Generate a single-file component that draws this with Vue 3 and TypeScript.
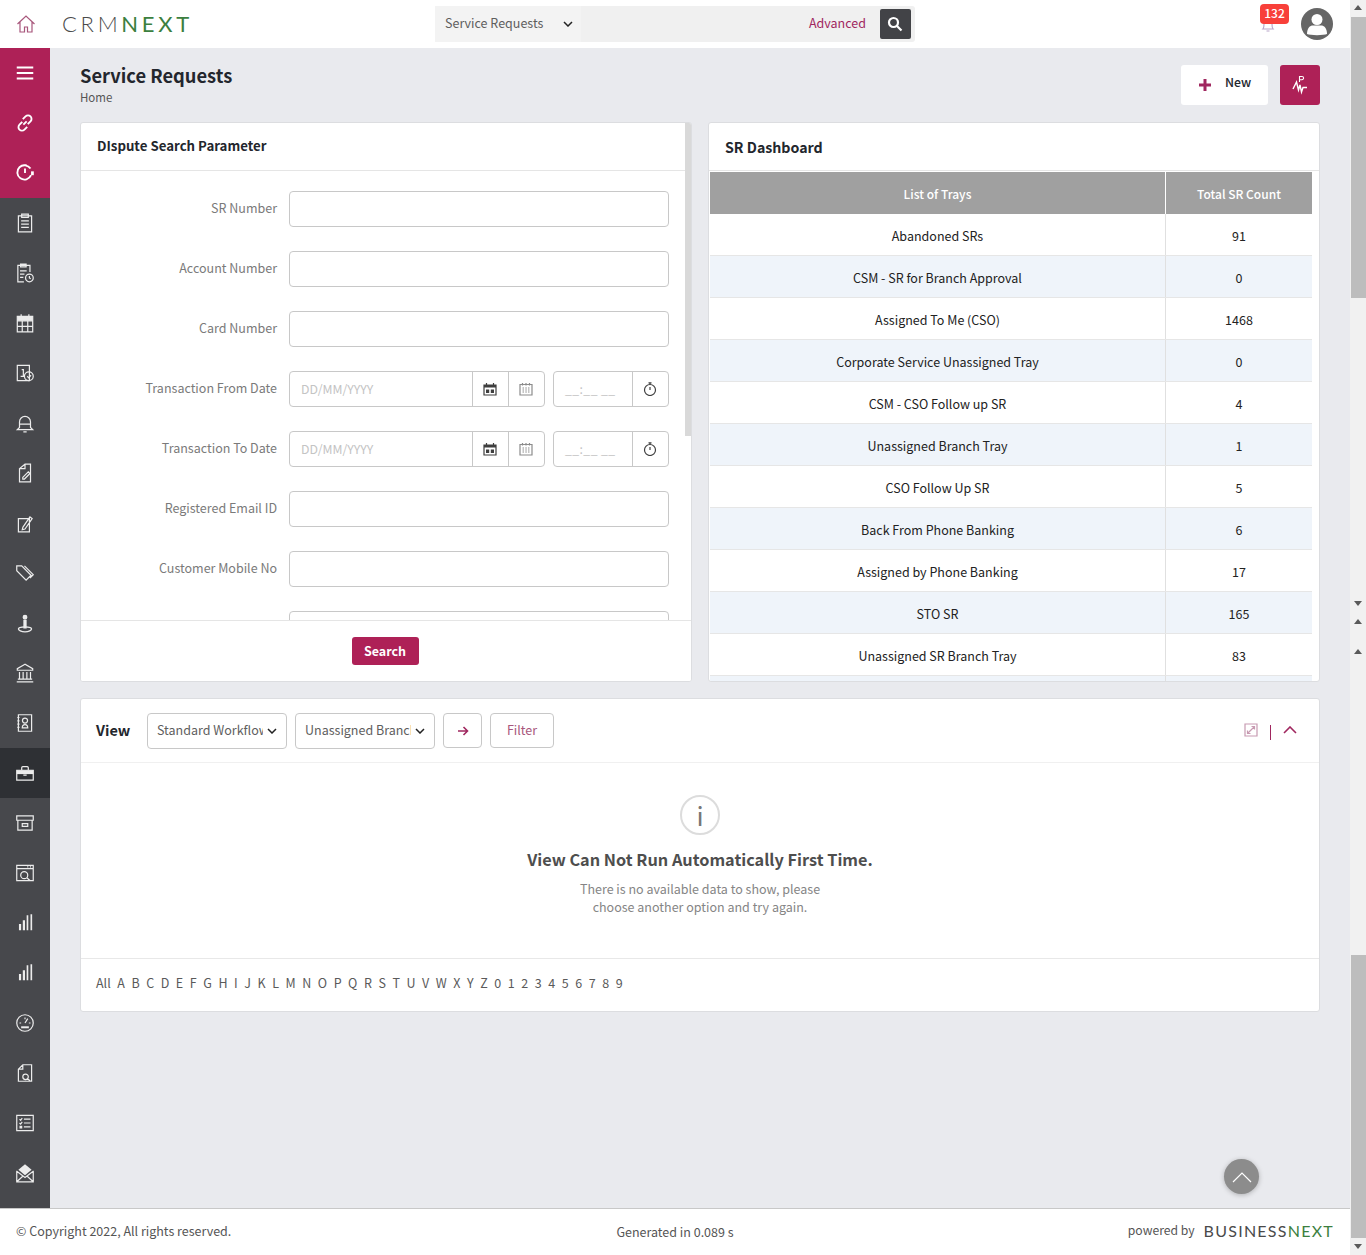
<template>
  <div class="screen">
    <div class="page">
      <!-- Top bar -->
      <header class="topbar">
        <svg class="home" viewBox="0 0 20 20" width="20" height="20">
          <path d="M1.500 10 10 2l8.500 8M4 8v10h4.500v-5h3v5H16V8" />
        </svg>
        <div class="logo"><span class="logo-crm">CRM</span><span class="logo-next">NEXT</span></div>
        <div class="global-search">
          <div class="scope">
            <span>Service Requests</span>
            <svg viewBox="0 0 10 6" width="10" height="6"><path d="M1 1l4 4 4-4" /></svg>
          </div>
          <span class="advanced">Advanced</span>
          <button class="search-go">
            <svg viewBox="0 0 16 16" width="16" height="16">
              <circle cx="6.500" cy="6.500" r="4.500" /><path d="M10 10l4.500 4.500" />
            </svg>
          </button>
        </div>
        <div class="top-right">
          <div class="bell">
            <svg viewBox="0 0 16 16" width="16" height="16"><path d="M3 12c1-1 1-2 1-5 0-2.500 2-4 4-4s4 1.500 4 4c0 3 0 4 1 5zM6.500 14h3" /></svg>
            <span class="badge">132</span>
          </div>
          <svg class="avatar" viewBox="0 0 32 32" width="32" height="32">
            <circle cx="16" cy="16" r="16" fill="#666" />
            <circle cx="16" cy="11.500" r="5.500" fill="#fff" />
            <path d="M6 26c0-6 3-8.500 6-8.500h8c3 0 6 2.500 6 8.500-3 1.500-17 1.500-20 0z" fill="#fff" />
          </svg>
        </div>
      </header>

      <div class="middle">
        <!-- Left rail -->
        <nav class="sidebar">
          <div v-for="(item, i) in navItems" :key="i" class="nav-item"
               :class="{ brand: i < 3, active: i === 14 }">
            <svg viewBox="0 0 20 20" width="22" height="22">
              <path v-for="(d, j) in item.lines" :key="j" :d="d" />
              <path v-if="item.solid" class="solid" :d="item.solid" />
            </svg>
          </div>
        </nav>

        <main class="content">
          <div class="title-row">
            <div>
              <h1>Service Requests</h1>
              <div class="crumb">Home</div>
            </div>
            <div class="title-actions">
              <button class="new-btn">
                <svg viewBox="0 0 14 14" width="14" height="14"><path d="M7 1v12M1 7h12" /></svg>
                <span>New</span>
              </button>
              <button class="pulse-btn">
                <svg viewBox="0 0 20 20" width="20" height="20">
                  <path d="M3 14 6.500 7l2 8L10 10l1.500 7 1.500-4.500h4" />
                  <path d="M9.500 7V1.500H12a1.600 1.600 0 0 1 0 3.200H9.500" class="thin" />
                </svg>
              </button>
            </div>
          </div>

          <div class="cards">
            <!-- Search form -->
            <section class="card search-card">
              <div class="card-head dispute">DIspute Search Parameter</div>
              <div class="form-body">
                <div v-for="(field, i) in formFields" :key="i" class="form-row">
                  <label>{{ field.label }}</label>
                  <div v-if="field.date" class="date-fields">
                    <div class="field-group date-group">
                      <span class="placeholder">DD/MM/YYYY</span>
                      <span class="addon">
                        <svg viewBox="0 0 14 14" width="14" height="14">
                          <path d="M1 3h12v10H1zM3.500 1v3M10.500 1v3" />
                          <path class="solid" d="M1 3h12v2.500H1zM3 7.500h3.200v3.500H3zM7.800 7.500H11v3.500H7.800z" />
                        </svg>
                      </span>
                      <span class="addon light">
                        <svg viewBox="0 0 14 14" width="14" height="14">
                          <path d="M1 2.500h12V13H1zM3.500 1v2.500M7 1v2.500M10.500 1v2.500M3.500 6h1.500M6.300 6h1.500M9 6h1.500M3.500 8h1.500M6.300 8h1.500M9 8h1.500M3.500 10h1.500M6.300 10h1.500M9 10h1.500" />
                        </svg>
                      </span>
                    </div>
                    <div class="field-group time-group">
                      <span class="placeholder mask">__:__ __</span>
                      <span class="addon">
                        <svg viewBox="0 0 14 14" width="14" height="14">
                          <circle cx="7" cy="8" r="5.500" /><path d="M5.500 .8h3M7 1V2.500M7 5V8" />
                        </svg>
                      </span>
                    </div>
                  </div>
                  <div v-else class="text-input"></div>
                </div>
              </div>
              <div class="form-foot"><button class="search-btn">Search</button></div>
              <div class="inner-thumb"></div>
            </section>

            <!-- SR dashboard -->
            <section class="card dash-card">
              <div class="card-head dash-head">SR Dashboard</div>
              <div class="tray-table">
                <div class="tray-row tray-header">
                  <div class="tray-name">List of Trays</div>
                  <div class="tray-count">Total SR Count</div>
                </div>
                <div v-for="(tray, i) in trays" :key="i" class="tray-row">
                  <div class="tray-name">{{ tray.name }}</div>
                  <div class="tray-count">{{ tray.count }}</div>
                </div>
              </div>
            </section>
          </div>

          <!-- View -->
          <section class="card view-card">
            <div class="view-bar">
              <strong>View</strong>
              <div class="select"><span>Standard Workflow</span><svg viewBox="0 0 10 6" width="10" height="6"><path d="M1 1l4 4 4-4" /></svg></div>
              <div class="select"><span>Unassigned Branch</span><svg viewBox="0 0 10 6" width="10" height="6"><path d="M1 1l4 4 4-4" /></svg></div>
              <button class="go-btn">
                <svg viewBox="0 0 12 10" width="12" height="10"><path d="M1 5h9.500M6.500 1l4 4-4 4" /></svg>
              </button>
              <button class="filter-btn">Filter</button>
              <div class="view-tools">
                <svg class="expand" viewBox="0 0 14 14" width="14" height="14">
                  <path d="M1 1h12v12H1zM3.500 10.500l7-7M7.500 3.500h3v3M3.500 7.500v3h3" />
                </svg>
                <span class="pipe"></span>
                <svg class="collapse" viewBox="0 0 14 8" width="14" height="8"><path d="M1 7l6-6 6 6" /></svg>
              </div>
            </div>
            <div class="empty">
              <div class="info-ring">i</div>
              <h2>View Can Not Run Automatically First Time.</h2>
              <p>There is no available data to show, please<br />choose another option and try again.</p>
            </div>
            <div class="alpha">
              <span v-for="ch in alphabet" :key="ch">{{ ch }}</span>
            </div>
          </section>

          <button class="to-top">
            <svg viewBox="0 0 20 12" width="20" height="12"><path d="M1 11l9-9 9 9" /></svg>
          </button>
        </main>
      </div>

      <footer class="footer">
        <span class="copy">© Copyright 2022, All rights reserved.</span>
        <span class="generated">Generated in 0.089 s</span>
        <span class="powered">powered by <span class="bn"><span>BUSINESS</span><span class="bn-next">NEXT</span></span></span>
      </footer>
    </div>

    <!-- Browser scrollbars, two stacked rails -->
    <aside class="rail">
      <div class="rail-part first">
        <i class="arrow up"></i>
        <div class="thumb thumb-a"></div>
        <i class="arrow down end"></i>
      </div>
      <div class="rail-part second">
        <i class="arrow up"></i>
        <i class="arrow up gap"></i>
        <div class="thumb thumb-b"></div>
        <i class="arrow down end"></i>
      </div>
    </aside>
  </div>
</template>

<script setup lang="ts">
interface NavItem {
  lines: string[]
  solid?: string
}

const navItems: NavItem[] = [
  { lines: [], solid: 'M2.500 4h15v2h-15zM2.500 9h15v2h-15zM2.500 14h15v2h-15z' },
  { lines: ['M8.500 11.500l3-3M8 6.500l2.500-2.500a3 3 0 0 1 4.500 4.500L12.500 11M12 13.500 9.500 16A3 3 0 0 1 5 11.500L7.500 9'] },
  { lines: ['M15.500 12a6.500 6.500 0 1 1-.5-6M10 6v4M8.500 3h3'], solid: 'M15.500 8.500h2.500v3.500h-2.500z' },
  { lines: ['M4 3.500h12V18H4zM7 2h6v3H7zM6.500 8h7M6.500 11h7M6.500 14h7'] },
  { lines: ['M14.500 9V3h-11v15H9M6 2h5v2.500H6zM5.500 8h6M5.500 11h4M5.500 14h3', 'M17.500 14.500a3.500 3.500 0 1 1-7 0 3.500 3.500 0 0 1 7 0zM14 12.700v1.800l1.200.8'] },
  { lines: ['M3 4h14v14H3zM6.500 2v4M13.500 2v4M3 8h14M7.500 8v10M12.500 8v10M3 13h14'], solid: 'M3 4h14v4H3z' },
  { lines: ['M3 3h11v14H3zM7 7h1.500v6M6 13h4', 'M17.500 13a4 4 0 1 1-8 0 4 4 0 0 1 8 0zM12 13l1.500 1.500 2-2.500'] },
  { lines: ['M5 14V9a5 5 0 0 1 10 0v5l2 2H3zM8.500 18h3M5.500 11h9'] },
  { lines: ['M5 6l5-4h5v16H5zM10 2v4H5', 'M8 14l5-5 1.500 1.500-5 5H8z'] },
  { lines: ['M4 6h10v12H4zM8 14l6.500-9.500 2 1.500L10 15.500 7.500 16z'] },
  { lines: ['M2.500 8V3.500H7l8.500 8.500-4.500 4.500zM9.500 3.500l8 8-3 3'] },
  { lines: ['M4 15.500c0-1 2.500-2 6-2s6 1 6 2-2.500 2.500-6 2.500-6-1.500-6-2.500z'], solid: 'M8.500 7h3v8h-3zM10 2.500a2.200 2.200 0 1 1 0 4.400 2.200 2.200 0 0 1 0-4.400z' },
  { lines: ['M10 2 3 6v1.500h14V6zM5 9v6M8.300 9v6M11.700 9v6M15 9v6M3.500 15.500h13M2.500 18h15'] },
  { lines: ['M4 2.500h12v15H4zM3 5h2M3 8h2M3 11h2M3 14h2', 'M7.500 14.500c0-2 1-3 2.500-3s2.500 1 2.500 3zM10 5.500a2.300 2.300 0 1 1 0 4.600 2.300 2.300 0 0 1 0-4.600z'] },
  { lines: ['M2.500 7.500h15v9h-15zM7 7.500V5.200c0-.5.500-1 1-1h4c.5 0 1 .5 1 1v2.300M8.500 12h3'], solid: 'M2.500 7.500h15v3.500h-15z' },
  { lines: ['M2.500 3.500h15v4h-15zM3.500 7.500v9h13v-9M7.500 10.500h5v2.500h-5z'] },
  { lines: ['M2.500 3h15v14h-15zM2.500 6h15M12 4.500h1M14.500 4.500h1M12.500 12a3.200 3.200 0 1 1-6.400 0 3.200 3.200 0 0 1 6.400 0zM11.700 14.300l3 2.700'] },
  { lines: [], solid: 'M4.500 11H6.500v5.500H4.500zM8 7.500h2v9H8zM11.500 3h1.500v13.500h-1.500zM15 2h1.500v14.500H15z' },
  { lines: [], solid: 'M4.500 11H6.500v5.500H4.500zM8 7.500h2v9H8zM11.500 3h1.500v13.500h-1.500zM15 2h1.500v14.500H15z' },
  { lines: ['M17.500 10a7.500 7.500 0 1 1-15 0 7.500 7.500 0 0 1 15 0zM10 10l2.500-4M5 10h1.500M10 5v1.500M13.500 10H15'], solid: 'M6.500 13h7v1.800h-7z' },
  { lines: ['M8 2.500h8v15H4V6.500zM8 2.500v4H4M13 13.500a2.500 2.500 0 1 1-5 0 2.500 2.500 0 0 1 5 0zM12.300 15.300l2.500 2'] },
  { lines: ['M2.500 3h15v14h-15zM9 6.500h6M9 10h6M9 13.500h6M5 6.500l1 1 1.500-2M5 10l1 1 1.500-2'], solid: 'M5 12.500h2.500V15H5z' },
  { lines: ['M2.500 8v10h15V8M2.500 18l5.500-5M17.500 18 12 13M2.500 8.500 10 14l7.500-5.500'], solid: 'M10 2l6 5-6 5-6-5z' },
]

const formFields = [
  { label: 'SR Number' },
  { label: 'Account Number' },
  { label: 'Card Number' },
  { label: 'Transaction From Date', date: true },
  { label: 'Transaction To Date', date: true },
  { label: 'Registered Email ID' },
  { label: 'Customer Mobile No' },
  // only the top edge of this input shows above the footer
  { label: '' },
]

const trays = [
  { name: 'Abandoned SRs', count: 91 },
  { name: 'CSM - SR for Branch Approval', count: 0 },
  { name: 'Assigned To Me (CSO)', count: 1468 },
  { name: 'Corporate Service Unassigned Tray', count: 0 },
  { name: 'CSM - CSO Follow up SR', count: 4 },
  { name: 'Unassigned Branch Tray', count: 1 },
  { name: 'CSO Follow Up SR', count: 5 },
  { name: 'Back From Phone Banking', count: 6 },
  { name: 'Assigned by Phone Banking', count: 17 },
  { name: 'STO SR', count: 165 },
  { name: 'Unassigned SR Branch Tray', count: 83 },
  { name: '', count: '' },
]

const alphabet = ['All', ...'ABCDEFGHIJKLMNOPQRSTUVWXYZ0123456789'.split('')]
</script>

<style>
html,
body {
  margin: 0;
  overflow: hidden;
}
</style>

<style scoped>
.screen {
  display: flex;
  width: 1366px;
  height: 1255px;
  overflow: hidden;
  font-family: "Noto Sans CJK SC", "Noto Sans", sans-serif;
  font-size: 12.5px;
  color: #222;
}
svg {
  display: block;
  flex: none;
  fill: none;
  stroke: currentColor;
  stroke-width: 1.2;
}
button {
  font-family: inherit;
  cursor: pointer;
}
h1,
h2,
p {
  margin: 0;
}

.page {
  width: 1350px;
  display: flex;
  flex-direction: column;
}

/* top bar */
.topbar {
  height: 48px;
  flex: none;
  display: flex;
  align-items: center;
  background: #fff;
  position: relative;
}
.home {
  margin-left: 16px;
  color: #a8577c;
}
.logo {
  margin-left: 26px;
  width: 140px;
  font-family: "Lato", sans-serif;
  font-size: 22px;
  font-weight: 300;
  letter-spacing: 3.7px;
  line-height: 48px;
}
.logo-crm {
  color: #4a4a4a;
}
.logo-next {
  color: #3c7f3f;
  font-weight: 400;
}
.global-search {
  margin-left: 233px;
  width: 480px;
  height: 36px;
  display: flex;
  align-items: center;
  background: #f0f0f0;
  border-radius: 3px;
}
.scope {
  width: 146px;
  height: 36px;
  padding: 0 7px 0 10px;
  box-sizing: border-box;
  display: flex;
  align-items: center;
  justify-content: space-between;
  background: #f3f3f3;
  color: #5e5e5e;
}
.scope span {
  margin-top: -4px;
}
.scope svg {
  margin: 0 1px 0 0;
  color: #222;
  stroke-width: 1.5;
}
.advanced {
  margin-left: auto;
  padding-bottom: 4px;
  color: #a0275f;
}
.search-go {
  margin: 0 4px 0 14px;
  width: 31px;
  height: 30px;
  padding: 0 2px 0 0;
  border: 0;
  border-radius: 2px;
  background: #424347;
  color: #fff;
  display: flex;
  align-items: center;
  justify-content: center;
}
.search-go svg {
  stroke-width: 2.2;
}
.top-right {
  margin-left: auto;
  margin-right: 17px;
  display: flex;
  align-items: center;
  gap: 25px;
}
.bell {
  position: relative;
  width: 16px;
  height: 16px;
  margin-top: 2px;
  color: #b9a6c9;
}
.badge {
  position: absolute;
  left: 0;
  top: -13px;
  width: 29px;
  height: 20px;
  border-radius: 4px;
  background: #f8403a;
  color: #fff;
  font-size: 12px;
  font-weight: 500;
  line-height: 18px;
  text-align: center;
}
.avatar {
  stroke: none;
}

/* sidebar */
.middle {
  flex: 1;
  min-height: 0;
  display: flex;
}
.sidebar {
  width: 50px;
  flex: none;
  background: #47484c;
  overflow: hidden;
}
.nav-item {
  height: 50px;
  display: flex;
  align-items: center;
  justify-content: center;
  color: #ececec;
}
.nav-item svg {
  stroke-width: 1.100;
}
.nav-item.brand {
  background: #ae2157;
  color: #fff;
}
.nav-item.brand svg {
  stroke-width: 1.700;
}
.nav-item.active {
  background: #2e3034;
}
.solid {
  fill: currentColor;
  stroke: none;
}

/* content */
.content {
  flex: 1;
  min-width: 0;
  position: relative;
  background: #e9eaee;
  padding: 0 30px;
}
.title-row {
  height: 74px;
  display: flex;
  justify-content: space-between;
}
h1 {
  margin-top: 13px;
  font-size: 18.3px;
  font-weight: 700;
  line-height: 28px;
  color: #23262d;
}
.crumb {
  font-size: 11.5px;
  line-height: 16px;
  color: #555;
}
.title-actions {
  display: flex;
  gap: 12px;
  margin-top: 17px;
}
.new-btn {
  width: 87px;
  height: 40px;
  padding: 0 0 0 17px;
  border: 0;
  border-radius: 3px;
  background: #fff;
  display: flex;
  align-items: center;
  gap: 13px;
  font-size: 12.3px;
  font-weight: 500;
  color: #23262d;
}
.new-btn span {
  margin-top: -6px;
}
.new-btn svg {
  color: #a0275f;
  stroke-width: 3;
}
.pulse-btn {
  width: 40px;
  height: 40px;
  padding: 0;
  border: 0;
  border-radius: 3px;
  background: #ae2157;
  color: #fff;
  display: flex;
  align-items: center;
  justify-content: center;
}
.pulse-btn svg {
  stroke-width: 1.400;
}
.pulse-btn .thin {
  stroke-width: 1.100;
}

/* cards */
.cards {
  display: flex;
  gap: 16px;
}
.card {
  background: #fff;
  border: 1px solid #dcdde0;
  border-radius: 3px;
  box-sizing: border-box;
  position: relative;
}
.search-card,
.dash-card {
  width: 612px;
  height: 560px;
  display: flex;
  flex-direction: column;
  overflow: hidden;
}
.card-head {
  flex: none;
  height: 47px;
  padding-left: 16px;
  border-bottom: 1px solid #e5e5e5;
  font-weight: 700;
  color: #23262d;
}
.dispute {
  line-height: 45px;
  font-size: 13.250px;
}
.dash-head {
  line-height: 48px;
  font-size: 14.200px;
}
.form-body {
  flex: 1;
  min-height: 0;
  overflow: hidden;
  padding-top: 20px;
}
.form-row {
  display: grid;
  grid-template-columns: 196px 380px;
  column-gap: 12px;
  margin-bottom: 24px;
}
.form-row label {
  text-align: right;
  line-height: 33px;
  color: #7a7a7a;
}
.text-input {
  height: 36px;
  box-sizing: border-box;
  border: 1px solid #c8c8c8;
  border-radius: 4px;
}
.date-fields {
  display: flex;
  gap: 8px;
}
.field-group {
  height: 36px;
  box-sizing: border-box;
  border: 1px solid #c8c8c8;
  border-radius: 4px;
  display: flex;
  align-items: center;
}
.date-group {
  width: 256px;
}
.time-group {
  width: 116px;
}
.placeholder {
  flex: 1;
  padding: 0 0 1px 11px;
  font-size: 12.300px;
  color: #c4c4c4;
}
.mask {
  letter-spacing: 0.400px;
}
.addon {
  width: 36px;
  height: 34px;
  padding-right: 2px;
  box-sizing: border-box;
  border-left: 1px solid #c8c8c8;
  display: flex;
  align-items: center;
  justify-content: center;
  color: #3f3f3f;
}
.addon.light {
  color: #8c8c8c;
}
.form-foot {
  flex: none;
  height: 61px;
  border-top: 1px solid #e5e5e5;
  display: flex;
  justify-content: center;
  padding: 16px 2px 0 0;
  box-sizing: border-box;
  background: #fff;
}
.search-btn {
  width: 67px;
  height: 28px;
  border: 0;
  border-radius: 3px;
  padding: 0 0 2px;
  background: #ae2157;
  color: #fff;
  font-size: 12.5px;
  font-weight: 700;
}
.inner-thumb {
  position: absolute;
  right: 0;
  top: 0;
  width: 6px;
  height: 313px;
  background: #d9d9d9;
}
.tray-table {
  margin: 1px 7px 0 1px;
}
.tray-row {
  height: 42px;
  display: flex;
  align-items: stretch;
  background: #fff;
  border-bottom: 1px solid #e6e6e6;
  box-sizing: border-box;
  line-height: 43px;
  text-align: center;
  color: #222;
}
.tray-row:nth-child(odd):not(.tray-header) {
  background: #eff4fa;
}
.tray-name {
  width: 455px;
  border-right: 1px solid #e0e0e0;
}
.tray-count {
  flex: 1;
}
.tray-header {
  background: #a0a0a0;
  color: #fff;
  font-size: 12px;
  font-weight: 500;
  line-height: 43px;
  border-bottom: 0;
}
.tray-header .tray-name {
  border-right-color: #fff;
}

/* view card */
.view-card {
  margin-top: 16px;
  height: 314px;
}
.view-bar {
  height: 64px;
  box-sizing: border-box;
  padding: 14px 22px 0 15px;
  border-bottom: 1px solid #f0f0f0;
  display: flex;
  align-items: flex-start;
  gap: 8px;
}
.view-bar strong {
  width: 43px;
  font-size: 14.500px;
  font-weight: 700;
  line-height: 33px;
  color: #23262d;
}
.select {
  width: 140px;
  height: 36px;
  padding: 0 9px;
  box-sizing: border-box;
  border: 1px solid #c8c8c8;
  border-radius: 4px;
  display: flex;
  align-items: center;
  gap: 4px;
  color: #5e5e5e;
}
.select span {
  width: 106px;
  overflow: hidden;
  white-space: nowrap;
  margin-top: -4px;
}
.select svg {
  color: #222;
  stroke-width: 1.500;
}
.go-btn,
.filter-btn {
  height: 35px;
  padding: 0;
  border: 1px solid #c8c8c8;
  border-radius: 4px;
  background: #fff;
  color: #a0275f;
  font-size: 12.5px;
  display: flex;
  align-items: center;
  justify-content: center;
}
.go-btn {
  width: 39px;
}
.go-btn svg {
  stroke-width: 1.600;
}
.filter-btn {
  width: 64px;
  padding-bottom: 2px;
  color: #a8577c;
}
.view-tools {
  margin: 1px 0 0 auto;
  display: flex;
  align-items: center;
  gap: 12px;
  height: 30px;
  color: #a0275f;
}
.expand {
  margin-top: 2px;
  color: #c79ab1;
}
.pipe {
  width: 1px;
  height: 15px;
  margin-top: 7px;
  background: #a0275f;
}
.collapse {
  margin-top: 2px;
  stroke-width: 1.600;
}
.empty {
  height: 196px;
  box-sizing: border-box;
  padding-top: 32px;
  text-align: center;
  border-bottom: 1px solid #e8e8e8;
}
.info-ring {
  width: 36px;
  height: 36px;
  margin: 0 auto;
  border: 2px solid #dcdcdc;
  border-radius: 50%;
  font-size: 26px;
  line-height: 36px;
  color: #777;
}
h2 {
  margin-top: 11px;
  font-size: 16.300px;
  font-weight: 700;
  line-height: 26px;
  color: #4e4e4e;
}
.empty p {
  margin-top: 8px;
  line-height: 18px;
  color: #858585;
}
.alpha {
  padding: 14px 0 0 15px;
  display: flex;
  gap: 6.550px;
  color: #5a5a5a;
  line-height: 20px;
}
.to-top {
  position: absolute;
  right: 91px;
  bottom: 14px;
  width: 35px;
  height: 35px;
  padding: 0;
  border: 0;
  border-radius: 50%;
  background: #8c8c8c;
  color: #fff;
  box-shadow: 0 1px 5px rgba(0, 0, 0, 0.25);
  display: flex;
  align-items: center;
  justify-content: center;
}
.to-top svg {
  stroke-width: 1.200;
}

/* footer */
.footer {
  height: 47px;
  flex: none;
  display: grid;
  grid-template-columns: 1fr 1fr 1fr;
  align-items: center;
  padding: 0 16px 2px;
  border-top: 1px solid #c8c8c8;
  box-sizing: border-box;
  background: #fff;
  color: #555;
}
.copy {
  margin-top: -2px;
}
.generated {
  text-align: center;
}
.powered {
  margin-top: -2px;
  font-size: 12.200px;
  display: flex;
  justify-content: flex-end;
  align-items: center;
  gap: 9px;
}
.bn {
  font-family: "Lato", sans-serif;
  font-size: 16px;
  letter-spacing: 1.250px;
  color: #4a4a4a;
}
.bn-next {
  color: #3c7f3f;
}

/* scroll rails */
.rail {
  width: 16px;
  flex: none;
  display: flex;
  flex-direction: column;
  background: #f1f1f1;
}
.rail-part {
  position: relative;
  flex: none;
}
.first {
  height: 612px;
}
.second {
  height: 643px;
}
.thumb {
  position: absolute;
  left: 1px;
  width: 15px;
  background: #bdbdbd;
}
.thumb-a {
  top: 17px;
  height: 281px;
}
.thumb-b {
  top: 343px;
  height: 283px;
}
.arrow {
  position: absolute;
  left: 4px;
  width: 0;
  height: 0;
  border-left: 4px solid transparent;
  border-right: 4px solid transparent;
}
.arrow.up {
  top: 7px;
  border-bottom: 5px solid #5a5a5a;
}
.arrow.down {
  border-top: 5px solid #5a5a5a;
}
.arrow.end {
  bottom: 6px;
}
.arrow.gap {
  top: 37px;
}
.first .arrow.up {
  top: 5px;
}
</style>
